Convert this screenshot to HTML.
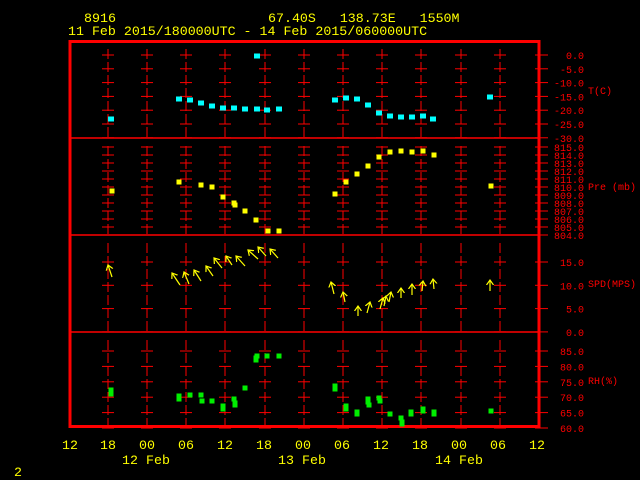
<!DOCTYPE html>
<html><head><meta charset="utf-8"><style>
html,body{margin:0;padding:0;background:#000;width:640px;height:480px;overflow:hidden}
svg{display:block}
text{font-family:"Liberation Mono",monospace;font-size:13.3px}
#labels text{font-size:10px}
</style></head><body>
<svg id="s" width="640" height="480" viewBox="0 0 640 480" xmlns="http://www.w3.org/2000/svg">
<defs><marker id="ah" markerWidth="8" markerHeight="8" refX="5" refY="4" orient="auto" markerUnits="userSpaceOnUse"><polyline points="0,0.5 5,4 0,7.5" fill="none" stroke="#ff0" stroke-width="1.2"/></marker></defs>
<g fill="#ff0">
<text x="84" y="22">8916</text>
<text x="268" y="22" xml:space="preserve">67.40S   138.73E   1550M</text>
<text x="68" y="35">11 Feb 2015/180000UTC - 14 Feb 2015/060000UTC</text>
<text x="14" y="476">2</text>
</g>
<g id="grid" stroke="#f00" stroke-width="1"></g>
<rect x="70" y="41.5" width="469" height="385" fill="none" stroke="#f00" stroke-width="3"/>
<g stroke="#f00" stroke-width="1.5"><line x1="70" y1="138" x2="539" y2="138"/><line x1="70" y1="235" x2="539" y2="235"/><line x1="70" y1="332" x2="539" y2="332"/></g>
<g id="labels" fill="#f00"></g>
<g id="pts"></g>
<g id="arr" stroke="#ff0" stroke-width="1.2" fill="none"></g>
<g fill="#ff0" text-anchor="middle">
<text x="70" y="449">12</text><text x="108" y="449">18</text><text x="147" y="449">00</text><text x="186" y="449">06</text><text x="225" y="449">12</text><text x="264" y="449">18</text><text x="303" y="449">00</text><text x="342" y="449">06</text><text x="381" y="449">12</text><text x="420" y="449">18</text><text x="459" y="449">00</text><text x="498" y="449">06</text><text x="537" y="449">12</text>
<text x="146" y="464">12 Feb</text><text x="302" y="464">13 Feb</text><text x="459" y="464">14 Feb</text>
</g>
</svg>
<script>
var NS="http://www.w3.org/2000/svg";
function el(p,t,a,txt){var e=document.createElementNS(NS,t);for(var k in a)e.setAttribute(k,a[k]);if(txt!=null)e.textContent=txt;document.getElementById(p).appendChild(e);return e;}
var xs=[108,147,186,225,265,304,343,382,421,461,500];
var panels=[
 {top:41,bot:138,y0:55,dy:13.8,labs:["0.0","-5.0","-10.0","-15.0","-20.0","-25.0","-30.0"],name:"T(C)",ny:90},
 {top:138,bot:235,y0:147,dy:8,labs:["815.0","814.0","813.0","812.0","811.0","810.0","809.0","808.0","807.0","806.0","805.0","804.0"],name:"Pre (mb)",ny:186},
 {top:235,bot:332,y0:262,dy:23.3,labs:["15.0","10.0","5.0","0.0"],name:"SPD(MPS)",ny:283},
 {top:332,bot:427,y0:351,dy:15.4,labs:["85.0","80.0","75.0","70.0","65.0","60.0"],name:"RH(%)",ny:380}
];
panels.forEach(function(p){
 xs.forEach(function(x){el("grid","line",{x1:x,y1:p.top+8,x2:x,y2:p.bot,"stroke-dasharray":"10,3"});});
 p.labs.forEach(function(l,i){var y=p.y0+i*p.dy;
  xs.forEach(function(x){el("grid","line",{x1:x-6,y1:y,x2:x+6,y2:y});});
  el("grid","line",{x1:535,y1:y,x2:548,y2:y});
  el("labels","text",{x:584,y:y+4,"text-anchor":"end"},l);});
 el("labels","text",{x:588,y:p.ny+4},p.name);
});
function sq(c,arr,w,h){arr.forEach(function(a){el("pts","rect",{x:a[0]-w/2,y:a[1]-h/2,width:w,height:a[2]||h,fill:c});});}
sq("#0ff",[[111,119],[179,99],[190,100],[201,103],[212,106],[223,108],[234,108],[245,109],[257,109],[267,110],[279,109],[257,56],[335,100],[346,98],[357,99],[368,105],[379,113],[390,116],[401,117],[412,117],[423,116],[433,119],[490,97]],6,5);
sq("#ff0",[[112,191],[179,182],[201,185],[212,187],[223,197],[234,203],[235,205],[245,211],[256,220],[279,231],[268,231],[335,194],[346,182],[357,174],[368,166],[379,157],[390,152],[401,151],[412,152],[423,151],[434,155],[491,186]],5,5);
sq("#0e0",[[111,390,9],[179,396,8],[190,395],[201,395],[202,401],[212,401],[223,406,8],[234,399],[235,403,7],[245,388],[256,358,7],[257,356],[267,356],[279,356],[335,386,8],[346,406,8],[357,412,7],[368,399,8],[369,405],[379,398],[380,401],[390,414],[401,418],[402,422,7],[411,412,7],[423,409,7],[434,412,7],[491,411]],5,5);
var A=[[108,265,112,277],[172,273,180,285],[184,272,189,284],[194,270,201,281],[206,266,213,276],[214,258,222,268],[226,256,232,265],[236,256,245,266],[248,250,258,259],[258,247,266,256],[270,249,278,258],[331,282,334,294],[343,292,345,302],[358,306,358,316],[370,302,367,313],[383,298,380,309],[386,296,384,306],[391,292,389,302],[401,288,401,298],[412,284,412,295],[423,281,422,291],[433,279,434,289],[490,280,490,291]];
A.forEach(function(a){el("arr","line",{x1:a[2],y1:a[3],x2:a[0],y2:a[1],"marker-end":"url(#ah)"});});
</script>
</body></html>
